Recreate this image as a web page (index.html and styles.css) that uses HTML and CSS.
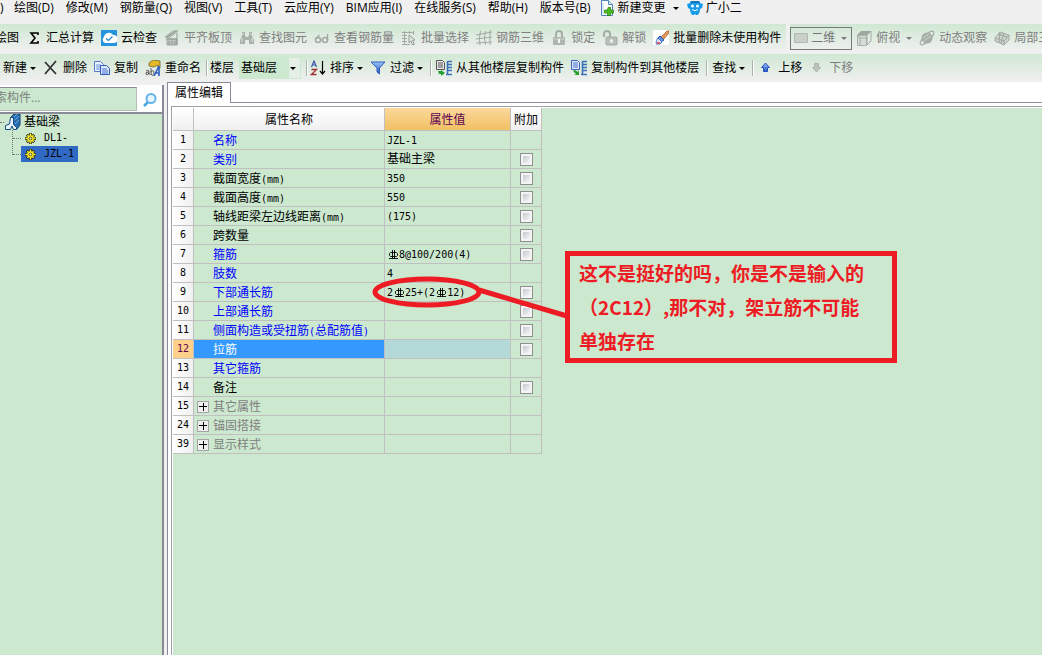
FILE: index.html
```html
<!DOCTYPE html>
<html lang="zh-CN">
<head>
<meta charset="utf-8">
<title>属性编辑</title>
<link rel="stylesheet" href="styles.css">
</head>
<body>
<svg class="defs" aria-hidden="true">
  <defs>
    <linearGradient id="blue" x1="0" y1="0" x2="0" y2="1"><stop offset="0" stop-color="#9cc4f8"/><stop offset="1" stop-color="#2452c4"/></linearGradient>
    <symbol id="rebar" viewBox="0 0 12 10"><path d="M5.500 0v9M7.500 0v9M2 8.500h9M3.500 2.500h6l1 1v2l-1 1h-6l-1-1v-2z" fill="none" stroke="#000" stroke-width=".9"/></symbol>
    <symbol id="gear" viewBox="0 0 12 12"><path d="M6 0v12M0 6h12M2 2l8 8M10 2l-8 8" stroke="#222" stroke-width="3"/><path d="M6 .5v11M.5 6h11M2.500 2.500l7 7M9.500 2.500l-7 7" stroke="#f8ec20" stroke-width="1.600"/><circle cx="6" cy="6" r="3.500" fill="#f8ec20"/><circle cx="6" cy="6" r="1.500" fill="#fff79a" stroke="#333" stroke-width=".9"/></symbol>
  </defs>
</svg>
<div class="app">
  <nav class="menu">
    <button class="menu-edge">)</button>
    <button>绘图(D)</button>
    <button>修改(M)</button>
    <button>钢筋量(Q)</button>
    <button>视图(V)</button>
    <button>工具(T)</button>
    <button>云应用(Y)</button>
    <button>BIM应用(I)</button>
    <button>在线服务(S)</button>
    <button>帮助(H)</button>
    <button>版本号(B)</button>
    <button class="item"><svg class="icon" viewBox="0 0 16 16"><path d="M2.500.5h7l4 4v11h-11z" fill="#fff" stroke="#4c84b8"/><path d="M9.500.5v4h4" fill="#d5e8f8" stroke="#4c84b8"/><path d="M4 3v11" stroke="#b8d4ec"/><path d="M9 7.500h2.500v2.500h3v3h-3v2.500h-3v-2.500h-3v-3h3z" fill="#4cba20" stroke="#28800d" stroke-width=".7"/></svg>新建变更<i class="arrow wide"></i></button>
    <button class="item"><svg class="icon" viewBox="0 0 16 16"><path d="M3 3l1-2h8l1 2 3 1-1 4-2 1c0 3-1 4-2 6H9l-1-1-1 1H5c-1-2-2-3-2-6L1 8 0 4z" fill="#159be8"/><path d="M4 1h8l1 2H3z" fill="#1276b9"/><circle cx="5.500" cy="6" r="1.500" fill="#fff"/><circle cx="10.500" cy="6" r="1.500" fill="#fff"/><path d="M5 9.500q3 2.500 6 0" fill="none" stroke="#fff"/></svg>广小二</button>
  </nav>

  <div class="bar bar-top">
    <div class="group group-main">
      <button class="item">绘图</button>
      <button class="item"><svg class="icon" viewBox="0 0 16 16"><path d="M12 5V3H5l4 5-4 5h7v-2" fill="none" stroke="#000" stroke-width="1.600"/></svg>汇总计算</button>
      <button class="item"><svg class="icon" viewBox="0 0 16 16"><path d="M0 0h16v16H0z" fill="#2694dc"/><path d="M4 13a3.500 3.500 0 0 1-1-6 5 5 0 0 1 9-2 4 4 0 0 1 1 8z" fill="#fff"/><path d="M5 8.500l2.500 2 4-4" fill="none" stroke="#2487cb" stroke-width="1.300"/></svg>云检查</button>
      <button class="item" disabled><svg class="icon" viewBox="0 0 16 16"><path d="M1 7l8-6h5L5 8zM3 9h10v6H3z" fill="#bac3bb" stroke="#a2aaa3"/><path d="M3 7l9-6M5 15v-4M8 15v-4M11 15v-4M13 3v12M2 9h11" stroke="#929a93"/></svg>平齐板顶</button>
      <button class="item" disabled><svg class="icon" viewBox="0 0 16 16"><path d="M3 2h3v3l1 2h2l1-2V2h3v4l2 4v4h-5v-4H6v4H1v-4l2-4z" fill="#a9b2aa"/><path d="M4 3v2m8-2v2M3 8v4m10-4v4" stroke="#dce5dd"/></svg>查找图元</button>
      <button class="item" disabled><svg class="icon" viewBox="0 0 16 16"><g fill="none" stroke="#a2aaa3" stroke-width="1.500"><circle cx="4" cy="10" r="2.500"/><circle cx="11" cy="10" r="2.500"/><path d="M1.500 9l4-4M13.500 10V4M6.500 10h2"/></g></svg>查看钢筋量</button>
      <button class="item" disabled><svg class="icon" viewBox="0 0 16 16"><path d="M1 2.500h12M1 5.500h5M1 8.500h5M1 11.500h5M1 14.500h8M3.500 1v13M8.500 1v3M12.500 1v4" stroke="#a2aaa3"/><path d="M8 5l6 5-2.500.5 2 4-2 .5-1.500-4-2 2z" fill="#dde6de" stroke="#969e97"/></svg>批量选择</button>
      <button class="item" disabled><svg class="icon" viewBox="0 0 16 16"><path d="M0 5l16-3M0 9l16-2M0 13l16-1M4.500 1q-2 7-.5 14M9.500 1q-2 7 0 14M14 0v15" fill="none" stroke="#a2aaa3"/></svg>钢筋三维</button>
      <button class="item" disabled><svg class="icon" viewBox="0 0 16 16"><path d="M5 7V4a3 3 0 0 1 6 0v3" fill="none" stroke="#a5ada6" stroke-width="2"/><rect x="2" y="7" width="12" height="8" rx="1" fill="#aeb6af"/><path d="M3 9h10" stroke="#cbd3cc"/><path d="M8 9v4" stroke="#f3f6f3" stroke-width="2"/></svg>锁定</button>
      <button class="item" disabled><svg class="icon" viewBox="0 0 16 16"><path d="M2 7V4a3 3 0 0 1 6 0v3" fill="none" stroke="#a5ada6" stroke-width="2"/><rect x="4" y="7" width="11" height="8" rx="1" fill="#b8c0b9" stroke="#a2aaa3"/><path d="M9.500 9v4M8 11h3" stroke="#f3f6f3" stroke-width="1.500"/></svg>解锁</button>
      <button class="item"><svg class="icon" viewBox="0 0 16 16"><path d="M0 0h16v15H0z" fill="#fff"/><path d="M8 7l6-6h2v2l-6 7z" fill="#e19a5b" stroke="#a3501e" stroke-width=".7"/><path d="M7 6l4 4-3 2-4-3z" fill="#6496e2" stroke="#2c57b0"/><path d="M5 8l4 4-2 2H3c1-2-1-2 2-6z" fill="#d8e4f7" stroke="#4c70c0"/><path d="M4 13h3" stroke="#dc5b68" stroke-width="2"/></svg>批量删除未使用构件</button>
    </div>
    <div class="group group-view">
      <label class="combo combo-view"><svg class="icon" viewBox="0 0 16 16"><path d="M1.500 3.500h13v9h-13z" fill="#c8d0c9" stroke="#b1bab2"/></svg><select aria-label="视图模式" disabled><option>二维</option></select><i class="arrow"></i></label>
      <button class="item" disabled><svg class="icon" viewBox="0 0 16 16"><path d="M1 5l4-4h10l-4 4z" fill="#9fa7a0"/><path d="M1.500 5.500h9v10h-9z" fill="#d5ded6" stroke="#aab2ab"/><path d="M11 5l4-4v10l-4 4zM4 15V8h7M4 8L1 5" fill="none" stroke="#a2aaa3"/></svg>俯视<i class="arrow wide"></i></button>
      <button class="item" disabled><svg class="icon" viewBox="0 0 16 16"><ellipse cx="8" cy="8" rx="9" ry="3" transform="rotate(-45 8 8)" fill="none" stroke="#a2aaa3"/><circle cx="8" cy="8" r="5.500" fill="#a5ada6"/><path d="M4 8l6-4M5 11l7-5" stroke="#c3cbc4" stroke-width="1.300"/></svg>动态观察</button>
      <button class="item" disabled><svg class="icon" viewBox="0 0 16 16"><path d="M1 8l5-6 9 3v5l-5 5-9-4z" fill="#cdd6ce" stroke="#a2aaa3"/><path d="M1 8l9 3 5-6M10 11v4M4 4l9 3M6 2l-1 11M10 3l-3 10" fill="none" stroke="#9da59e"/></svg>局部三维</button>
    </div>
  </div>

  <div class="bar bar-edit">
    <button class="item">新建<i class="arrow"></i></button>
    <button class="item"><svg class="icon" viewBox="0 0 16 16"><path d="M2 2l11 12M13 1L2 14" stroke="#333" stroke-width="1.800"/></svg>删除</button>
    <button class="item"><svg class="icon" viewBox="0 0 16 16"><path d="M.5 1.500h6l3 3v7h-9z" fill="#eaf2ff" stroke="#5878c8"/><path d="M2 5h5M2 7h5M2 9h5" stroke="#6b93dc"/><path d="M6.500 5.500h6l3 3v6h-9z" fill="#dce8ff" stroke="#3558b5"/><path d="M8 9h5M8 11h6M8 13h6" stroke="#4775cd"/></svg>复制</button>
    <button class="item"><svg class="icon" viewBox="0 0 16 16"><path d="M4 3l4-3 7 1v7h-2V5L9 7 4 6z" fill="#e6b927" stroke="#73612a" stroke-width=".8"/><path d="M1 11q3-2 3 1v3M4 12q-4 0-3 2t3-1M6 8v7M6 12q3-3 3 1t-3 1" fill="none" stroke="#555"/><path d="M9 16l5-10v10M10 13h4" fill="none" stroke="#2e5fc2" stroke-width="1.600"/></svg>重命名</button>
    <i class="sep tight"></i>
    <label class="floor" for="floor">楼层</label>
    <span class="combo combo-floor"><select id="floor"><option>基础层</option></select><i class="arrow"></i></span>
    <i class="sep tight"></i>
    <button class="item"><svg class="icon" viewBox="0 0 16 16"><path d="M1.500 7L4 1l2.500 6M2.500 5h3" fill="none" stroke="#3c55a8" stroke-width="1.200"/><path d="M1.500 9.500h5l-5 5h5" fill="none" stroke="#a13232" stroke-width="1.300"/><path d="M12.500 1v13M10 11l2.500 3 2.500-3" fill="none" stroke="#000" stroke-width="1.200"/></svg>排序<i class="arrow"></i></button>
    <button class="item"><svg class="icon" viewBox="0 0 16 16"><path d="M1 2h14l-5.500 6v6L7 12V8z" fill="url(#blue)" stroke="#315cc2"/></svg>过滤<i class="arrow"></i></button>
    <i class="sep"></i>
    <button class="item"><svg class="icon" viewBox="0 0 16 16"><path d="M.5.5h6l2 2v7h-8z" fill="#e8e8e8" stroke="#555"/><path d="M2 3h5M2 5h5M2 7h5" stroke="#555"/><path d="M11.500 1v14M12 1.500h4M12 4.500h4M12 7.500h4M12 10.500h4M10 14.500h6" stroke="#3a73b5" stroke-width="1.600"/><path d="M2 11h3v-1l4 3-4 3v-2H3z" fill="#23a02d"/></svg>从其他楼层复制构件</button>
    <button class="item"><svg class="icon" viewBox="0 0 16 16"><path d="M.5.5h6l2 2v7h-8z" fill="#dfeaff" stroke="#3c61b9"/><path d="M2 3h5M2 5h5M2 7h5" stroke="#4470c9"/><path d="M11.500 1v14M12 1.500h4M12 4.500h4M12 7.500h4M12 10.500h4M10 14.500h6" stroke="#3a73b5" stroke-width="1.600"/><path d="M8 10v5H3l2-1-3-3 2-1 3 2z" fill="#23a02d"/></svg>复制构件到其他楼层</button>
    <i class="sep"></i>
    <button class="item">查找<i class="arrow"></i></button>
    <i class="sep"></i>
    <button class="item"><svg class="icon" viewBox="0 0 16 16"><path d="M7.500 3l4 4.500H9.500v4h-4v-4h-2z" fill="url(#blue)" stroke="#2852bd"/></svg>上移</button>
    <button class="item" disabled><svg class="icon" viewBox="0 0 16 16"><path d="M7.500 12l-4-4.500h2v-4h4v4h2z" fill="#bcc4bd" stroke="#acb4ad"/></svg>下移</button>
  </div>

  <main class="main">
    <aside class="side">
      <div class="search">
        <input type="text" aria-label="搜索构件" placeholder="搜索构件...">
        <button aria-label="搜索"><svg class="icon" viewBox="0 0 16 16"><path d="M6 10l-4 4" stroke="#4aa5e4" stroke-width="2.500"/><circle cx="9" cy="6.500" r="4.500" fill="#e7f5ff" stroke="#65b4eb" stroke-width="2"/></svg></button>
      </div>
      <ul class="tree">
        <li class="root"><svg class="icon" viewBox="0 0 16 16"><path d="M6 3l3-3h6v11l-3 4H9z" fill="#286fb2" stroke="#123e72"/><path d="M9 3l3-3M10 6l4-4M10 10l4-4" stroke="#69a9dd"/><path d="M5.500 3.500h3v7l3 3v2h-3L7 12l-1.500 3.500h-5v-4l4-1.500z" fill="#e7f2fc" stroke="#174d82"/></svg>基础梁
          <ul>
            <li><span class="node"><svg class="gear"><use href="#gear"/></svg><span class="mono">DL1-</span></span></li>
            <li><span class="node selected"><svg class="gear"><use href="#gear"/></svg><span class="mono">JZL-1</span></span></li>
          </ul>
        </li>
      </ul>
    </aside>

    <section class="editor">
      <div class="tabs"><button class="tab">属性编辑</button><span class="tab-line"></span></div>
      <div class="sheet">
        <table class="props">
          <colgroup><col class="c-num"><col class="c-name"><col class="c-value"><col class="c-add"></colgroup>
          <thead><tr><th></th><th>属性名称</th><th class="hot">属性值</th><th>附加</th></tr></thead>
          <tbody>
            <tr><th>1</th><td class="key">名称</td><td><span class="mono">JZL-1</span></td><td></td></tr>
            <tr><th>2</th><td class="key">类别</td><td>基础主梁</td><td><input type="checkbox" aria-label="类别"></td></tr>
            <tr><th>3</th><td>截面宽度<span class="mono">(mm)</span></td><td><span class="mono">350</span></td><td><input type="checkbox" aria-label="截面宽度"></td></tr>
            <tr><th>4</th><td>截面高度<span class="mono">(mm)</span></td><td><span class="mono">550</span></td><td><input type="checkbox" aria-label="截面高度"></td></tr>
            <tr><th>5</th><td>轴线距梁左边线距离<span class="mono">(mm)</span></td><td><span class="mono">(175)</span></td><td><input type="checkbox" aria-label="轴线距梁左边线距离"></td></tr>
            <tr><th>6</th><td>跨数量</td><td></td><td><input type="checkbox" aria-label="跨数量"></td></tr>
            <tr><th>7</th><td class="key">箍筋</td><td><span class="mono"><svg class="rebar"><use href="#rebar"/></svg>8@100/200(4)</span></td><td><input type="checkbox" aria-label="箍筋"></td></tr>
            <tr><th>8</th><td class="key">肢数</td><td><span class="mono">4</span></td><td></td></tr>
            <tr><th>9</th><td class="key">下部通长筋</td><td><span class="mono">2<svg class="rebar"><use href="#rebar"/></svg>25+(2<svg class="rebar"><use href="#rebar"/></svg>12)</span></td><td><input type="checkbox" aria-label="下部通长筋"></td></tr>
            <tr><th>10</th><td class="key">上部通长筋</td><td></td><td><input type="checkbox" aria-label="上部通长筋"></td></tr>
            <tr><th>11</th><td class="key">侧面构造或受扭筋<span class="mono">(</span>总配筋值<span class="mono">)</span></td><td></td><td><input type="checkbox" aria-label="侧面构造或受扭筋"></td></tr>
            <tr class="current"><th>12</th><td>拉筋</td><td></td><td><input type="checkbox" aria-label="拉筋"></td></tr>
            <tr><th>13</th><td class="key">其它箍筋</td><td></td><td></td></tr>
            <tr><th>14</th><td>备注</td><td></td><td><input type="checkbox" aria-label="备注"></td></tr>
            <tr class="fold"><th>15</th><td><button class="plus" aria-label="展开其它属性"></button>其它属性</td><td></td><td></td></tr>
            <tr class="fold"><th>24</th><td><button class="plus" aria-label="展开锚固搭接"></button>锚固搭接</td><td></td><td></td></tr>
            <tr class="fold"><th>39</th><td><button class="plus" aria-label="展开显示样式"></button>显示样式</td><td></td><td></td></tr>
          </tbody>
        </table>
      </div>
    </section>
  </main>

  <svg class="mark" viewBox="0 0 200 48" aria-hidden="true"><ellipse cx="57" cy="20" rx="52" ry="13" /><path d="M109 18l88 26"/></svg>
  <p class="note">这不是挺好的吗，你是不是输入的<br>（2C12）,那不对，架立筋不可能<br>单独存在</p>
</div>
</body>
</html>
```

FILE: styles.css
```css
* {
  box-sizing: border-box;
}

body {
  margin: 0;
  background: #f0f0f0;
  color: #000;
  font: 12px/16px "Open Sans", "Noto Sans CJK SC", sans-serif;
}

button, select, input {
  margin: 0;
  padding: 0;
  border: 0;
  background: none;
  color: inherit;
  font: inherit;
}

ul {
  margin: 0;
  padding: 0;
  list-style: none;
}

.defs {
  position: absolute;
  width: 0;
  height: 0;
}

.app {
  position: relative;
  display: flex;
  flex-direction: column;
  min-height: 100vh;
  overflow: hidden;
}

.icon {
  flex: none;
  width: 16px;
  height: 16px;
}

.item {
  display: flex;
  flex: none;
  align-items: center;
  gap: 4px;
  white-space: nowrap;
}

.item:disabled {
  color: #808080;
}

.arrow {
  flex: none;
  border: 3px solid transparent;
  border-top-color: currentColor;
  border-bottom: 0;
}

.arrow.wide {
  margin-left: 2px;
}

/* menu and toolbars */

.menu {
  display: flex;
  gap: 12px;
  height: 24px;
  padding-bottom: 8px;
  white-space: nowrap;
}

.menu-edge {
  width: 2px;
}

.menu .item {
  gap: 3px;
  margin-left: -4px;
}

.menu .arrow {
  margin-left: 4px;
}

.bar {
  display: flex;
  align-items: center;
  height: 28px;
  background: linear-gradient(#d0e8d3, #f0f0f0);
}

.bar-top {
  gap: 4px;
  margin-bottom: 2px;
  background: none;
}

.group {
  display: flex;
  flex: none;
  align-items: center;
  gap: 7px;
  height: 28px;
  background: linear-gradient(#d0e8d3, #f0f0f0);
}

.group-main {
  margin-left: -5px;
  padding-right: 5px;
}

.group-view {
  flex: 1;
}

.group-view .item:first-of-type {
  margin-left: -3px;
}

.bar-edit {
  gap: 7px;
  padding-left: 3px;
}

.bar-edit .arrow {
  margin-left: -1px;
}

.sep {
  flex: none;
  width: 2px;
  height: 16px;
  margin-right: -3px;
  border-left: 1px solid #aab0ab;
  border-right: 1px solid #fff;
}

.sep.tight {
  margin: 0 -5px 0 -2px;
}

.floor {
  flex: none;
  margin-right: -2px;
}

.combo {
  display: flex;
  flex: none;
  align-items: center;
}

.combo select {
  flex: 1;
  min-width: 0;
  appearance: none;
  opacity: 1;
}

.combo-view {
  width: 62px;
  height: 23px;
  padding: 0 4px 0 2px;
  gap: 2px;
  border: 1px solid #777b78;
  color: #777;
}

.combo-floor {
  width: 62px;
  height: 22px;
  padding: 0 4px 0 1px;
  border: 1px solid #cce8cf;
  background: linear-gradient(90deg, #cce8cf 49px, #e6efe7 49px);
}

/* component tree */

.main {
  display: flex;
  flex: 1;
}

.side {
  display: flex;
  flex: none;
  flex-direction: column;
  width: 164px;
  margin: 3px 3px 0 0;
  border-right: 2px solid #8a8a96;
  background: #fff;
}

.search {
  display: flex;
  height: 27px;
  padding-top: 2px;
  overflow: hidden;
}

.search input {
  flex: none;
  width: 157px;
  height: 24px;
  margin-left: -20px;
  padding: 0 0 4px 2px;
  border: 1px solid #b4bcb6;
  border-top-color: #8a8a96;
  background: #cce8cf;
}

.search input::placeholder {
  color: #7c827d;
  opacity: 1;
}

.search button {
  display: flex;
  flex: 1;
  align-items: center;
  justify-content: center;
}

.tree {
  flex: 1;
  border-top: 2px solid #8a8a96;
  background: #cce8cf;
}

.root {
  position: relative;
  padding-left: 24px;
}

.root > .icon {
  position: absolute;
  left: 5px;
  top: 0;
}

.root > ul {
  height: 25px;
  margin-left: -12px;
  border-left: 1px dotted #777;
}

.root::before {
  content: "";
  position: absolute;
  top: 8px;
  left: 0;
  width: 4px;
  border-top: 1px dotted #777;
}

.root li {
  display: flex;
  align-items: center;
  height: 16px;
}

.root li::before {
  content: "";
  width: 8px;
  border-top: 1px dotted #777;
}

.node {
  display: flex;
  align-items: center;
  gap: 8px;
  height: 16px;
  padding: 0 4px;
}

.selected {
  background: #316ac5;
}

.gear {
  width: 11px;
  height: 11px;
}

.mono {
  font-family: "DejaVu Sans Mono", monospace;
  font-size: 10px;
  line-height: 12px;
}

/* property sheet */

.editor {
  display: flex;
  flex: 1;
  flex-direction: column;
  min-width: 0;
  border-left: 1px solid #8a8a96;
  background: #fff;
}

.tabs {
  display: flex;
  height: 21px;
}

.tab {
  padding: 0 7px;
  border-top: 1px solid #8a8a96;
  border-right: 1px solid #8a8a96;
}

.tab-line {
  flex: 1;
  border-bottom: 1px solid #8a8a96;
}

.sheet {
  flex: 1;
  margin: 3px 0 0 3px;
  padding: 1px 0 0 1px;
  border: 1px solid #a0a0a8;
  border-width: 1px 0 0 1px;
  box-shadow: inset 1px 1px #fff;
  background: #cce8cf;
}

.props {
  width: 369px;
  table-layout: fixed;
  border-collapse: separate;
  border-spacing: 0;
  white-space: nowrap;
}

.c-num { width: 21px; }
.c-name { width: 191px; }
.c-value { width: 126px; }
.c-add { width: 31px; }

.props th,
.props td {
  height: 19px;
  padding: 0;
  border: 1px solid #c0c0c0;
  border-width: 0 1px 1px 0;
  font-weight: 400;
  line-height: 14px;
  text-align: center;
}

.props th {
  background: linear-gradient(#fff, #f0f0f0);
}

.props thead th {
  height: 23px;
  padding-top: 1px;
}

.props thead .hot {
  background: linear-gradient(#fbd89c, #f1c063);
  color: #5c0050;
}

.props tbody th {
  background: linear-gradient(90deg, #fff, #f0f0f0);
  font-family: "DejaVu Sans Mono", monospace;
  font-size: 10px;
}

.props td:nth-child(2) {
  padding: 2px 0 0 19px;
  text-align: left;
}

.props td:nth-child(3) {
  padding-left: 2px;
  text-align: left;
}

.props .key {
  color: #00f;
}

.props .current th {
  background: #ffd08a;
  color: #5c0050;
}

.props .current td:nth-child(2) {
  background: #39f;
  color: #fff;
}

.props .current td:nth-child(3) {
  background: #b3dad9;
}

.props .fold td:nth-child(2) {
  padding-left: 3px;
  color: #808080;
}

.plus {
  width: 12px;
  height: 12px;
  margin-right: 4px;
  border: 1px solid #a4a4a4;
  background:
    linear-gradient(#000, #000) 1px 4px / 8px 1px no-repeat,
    linear-gradient(#000, #000) 5px 1px / 1px 8px no-repeat,
    #eee;
  vertical-align: -1px;
}

.props input {
  display: block;
  width: 13px;
  height: 13px;
  margin: 1px auto 0;
  padding: 2px;
  appearance: none;
  border: 1px solid #8e8f8f;
  background: linear-gradient(135deg, #c4c9d2, #f6f6f6) content-box, #f4f4f4;
}

.rebar {
  width: 12px;
  height: 10px;
  vertical-align: -2px;
}

/* annotation laid over the sheet */

.mark {
  position: absolute;
  left: 370px;
  top: 272px;
  width: 200px;
  height: 48px;
  fill: none;
  stroke: #ed1c24;
  stroke-width: 5;
  pointer-events: none;
}

.note {
  position: absolute;
  left: 565px;
  top: 251px;
  width: 332px;
  margin: 0;
  padding: 0 9px;
  border: 5px solid #ed1c24;
  color: #ed1c24;
  font: bold 19px/34px "Noto Sans CJK SC", sans-serif;
  white-space: nowrap;
}
```
